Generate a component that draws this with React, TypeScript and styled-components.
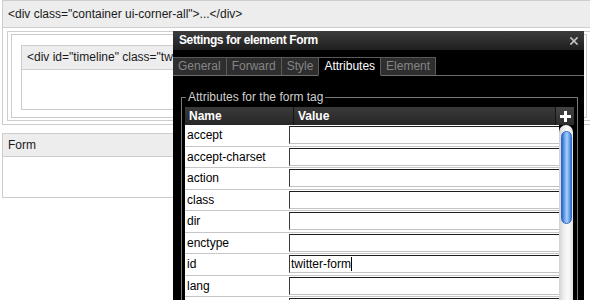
import React from "react";
import styled, { createGlobalStyle } from "styled-components";

const GlobalStyle = createGlobalStyle`
  html, body {
    margin: 0;
    padding: 0;
    background: #fff;
    overflow: hidden;
  }
  body {
    font-family: "Liberation Sans", Arial, sans-serif;
    font-size: 12px;
    color: #111;
  }
`;

const attributes = [
  { name: "accept", value: "" },
  { name: "accept-charset", value: "" },
  { name: "action", value: "" },
  { name: "class", value: "" },
  { name: "dir", value: "" },
  { name: "enctype", value: "" },
  { name: "id", value: "twitter-form", focused: true },
  { name: "lang", value: "" },
  { name: "method", value: "" },
  { name: "name", value: "" },
  { name: "onreset", value: "" },
  { name: "onsubmit", value: "" },
  { name: "style", value: "" },
  { name: "title", value: "" },
];

const tabs = ["General", "Forward", "Style", "Attributes", "Element"];

export default function App() {
  return (
    <Page>
      <GlobalStyle />
      <Container>
        <PanelHeader $height={26}>
          {'<div class="container ui-corner-all">...</div>'}
        </PanelHeader>
        <ContainerBody>
          <OuterFrame>
            <InnerFrame>
              <Panel>
                <PanelHeader $height={23}>
                  {'<div id="timeline" class="twitter-timeline">...</div>'}
                </PanelHeader>
                <PanelBody $height={39} />
              </Panel>
            </InnerFrame>
          </OuterFrame>
        </ContainerBody>
      </Container>

      <FormPanel>
        <PanelHeader $height={22}>Form</PanelHeader>
        <PanelBody $height={40} />
      </FormPanel>

      <Dialog>
        <TitleBar>
          <Title>Settings for element Form</Title>
          <CloseButton>
            <svg width="8" height="8" viewBox="0 0 8 8">
              <path d="M1 1 L7 7 M7 1 L1 7" stroke="#c4c4c4" strokeWidth="1.7" strokeLinecap="square" />
            </svg>
          </CloseButton>
        </TitleBar>
        <TabBar>
          {tabs.map((t) => (
            <Tab key={t} $active={t === "Attributes"}>
              {t}
            </Tab>
          ))}
        </TabBar>
        <Fieldset>
          <Legend>Attributes for the form tag</Legend>
          <Grid>
            <GridHeader>
              <HeadCell $width={109}>Name</HeadCell>
              <HeadCell $grow>Value</HeadCell>
              <AddCell>
                <svg width="11" height="11" viewBox="0 0 11 11">
                  <rect x="4" y="0" width="3" height="11" fill="#fff" />
                  <rect x="0" y="4" width="11" height="3" fill="#fff" />
                </svg>
              </AddCell>
            </GridHeader>
            <GridBody>
              <Rows>
                {attributes.map((a) => (
                  <Row key={a.name}>
                    <NameCell>{a.name}</NameCell>
                    <Field>
                      {a.value}
                      {a.focused && <Caret />}
                    </Field>
                  </Row>
                ))}
              </Rows>
              <ScrollTrack>
                <ScrollThumb />
              </ScrollTrack>
            </GridBody>
          </Grid>
        </Fieldset>
      </Dialog>
    </Page>
  );
}

const Page = styled.div`
  position: relative;
  width: 590px;
  height: 300px;
  padding-left: 2px;
  box-sizing: border-box;
`;

const Container = styled.div`
  width: 592px;
  border: 1px solid #cdcdcd;
  background: #fff;
`;

const PanelHeader = styled.div<{ $height: number }>`
  height: ${(p) => p.$height}px;
  line-height: ${(p) => p.$height}px;
  padding-left: 5px;
  background: #ededed;
  border-bottom: 1px solid #cdcdcd;
  color: #1a1a1a;
  white-space: nowrap;
  overflow: hidden;
`;

const PanelBody = styled.div<{ $height: number }>`
  height: ${(p) => p.$height}px;
  background: #fff;
`;

const ContainerBody = styled.div`
  padding: 3px 4px 3px 4px;
`;

const OuterFrame = styled.div`
  border: 1px solid #cdcdcd;
  padding: 2px 3px;
`;

const InnerFrame = styled.div`
  border: 1px solid #cdcdcd;
  padding: 10px 9px 7px 9px;
`;

const Panel = styled.div`
  border: 1px solid #cdcdcd;
`;

const FormPanel = styled.div`
  width: 420px;
  margin-top: 8px;
  border: 1px solid #cdcdcd;
`;

const Dialog = styled.div`
  position: absolute;
  left: 173px;
  top: 31px;
  width: 411px;
  height: 290px;
  background: #000;
  overflow: hidden;
`;

const TitleBar = styled.div`
  display: flex;
  align-items: center;
  justify-content: space-between;
  height: 19px;
  padding: 0 6px;
  background: linear-gradient(#3d3d3d, #1f1f1f);
`;

const Title = styled.span`
  color: #fff;
  font-weight: bold;
  letter-spacing: -0.4px;
  line-height: 19px;
`;

const CloseButton = styled.span`
  display: flex;
`;

const TabBar = styled.div`
  display: flex;
  align-items: flex-end;
  height: 25px;
  border-bottom: 1px solid #6c6c6c;
`;

const Tab = styled.div<{ $active?: boolean }>`
  height: 17px;
  line-height: 17px;
  padding: 0 5px;
  border-top: 1px solid #5a5a5a;
  border-right: 1px solid #5a5a5a;
  background: ${(p) => (p.$active ? "#000" : "#2e2e2e")};
  color: ${(p) => (p.$active ? "#fff" : "#858585")};
  margin-bottom: ${(p) => (p.$active ? "-1px" : "0")};
  border-bottom: ${(p) => (p.$active ? "1px solid #000" : "none")};
  ${(p) => p.$active && "border-left: 1px solid #5a5a5a; margin-left: -1px;"}
`;

const Fieldset = styled.fieldset`
  margin: 14px 6px 0 8px;
  padding: 3px 3px 0 3px;
  border: 1px solid #7a7a7a;
  min-width: 0;
`;

const Legend = styled.legend`
  padding: 0 2px;
  margin-left: 1px;
  color: #cfcfcf;
  line-height: 14px;
`;

const Grid = styled.div`
  display: flex;
  flex-direction: column;
`;

const GridHeader = styled.div`
  display: flex;
  height: 18px;
  background: linear-gradient(#3a3a3a, #272727);
`;

const HeadCell = styled.div<{ $width?: number; $grow?: boolean }>`
  ${(p) => (p.$width ? `width: ${p.$width}px;` : "")}
  ${(p) => (p.$grow ? "flex: 1;" : "")}
  box-sizing: border-box;
  padding-left: 4px;
  line-height: 18px;
  color: #fff;
  font-weight: bold;
  border-right: 1px solid #141414;
`;

const AddCell = styled.div`
  width: 18px;
  display: flex;
  align-items: center;
  justify-content: center;
  background: linear-gradient(#444, #2c2c2c);
`;

const GridBody = styled.div`
  display: flex;
  align-items: stretch;
`;

const Rows = styled.div`
  flex: 1;
  overflow: hidden;
  background: #fff;
`;

const Row = styled.div`
  display: flex;
  align-items: center;
  height: 21.5px;
  box-sizing: border-box;
  border-bottom: 1px solid #c6c6c6;
`;

const NameCell = styled.div`
  width: 104px;
  flex-shrink: 0;
  box-sizing: border-box;
  padding-left: 2px;
  color: #000;
  white-space: nowrap;
`;

const Field = styled.div`
  display: flex;
  align-items: center;
  flex-shrink: 0;
  width: 290px;
  height: 18px;
  box-sizing: border-box;
  padding-left: 1px;
  border-top: 1px solid #1e1e1e;
  border-left: 1px solid #3a3a3a;
  border-bottom: 1px solid #c2c2c2;
  background: #fff;
  color: #000;
`;

const Caret = styled.span`
  width: 1px;
  height: 14px;
  background: #000;
`;

const ScrollTrack = styled.div`
  width: 14px;
  margin-right: 1px;
  padding-top: 6px;
  box-sizing: border-box;
  border-radius: 7px 7px 0 0;
  background: linear-gradient(to right, #d2d2d2, #efefef 35%, #fbfbfb 65%, #e2e2e2);
`;

const ScrollThumb = styled.div`
  width: 11px;
  height: 93px;
  margin-left: 2px;
  box-sizing: border-box;
  border-radius: 6px;
  border: 1px solid #3167c4;
  background: linear-gradient(to right, #2f67c9, #6ea6ec 30%, #a9cff8 55%, #6aa3ea 80%, #3a72d0);
`;
